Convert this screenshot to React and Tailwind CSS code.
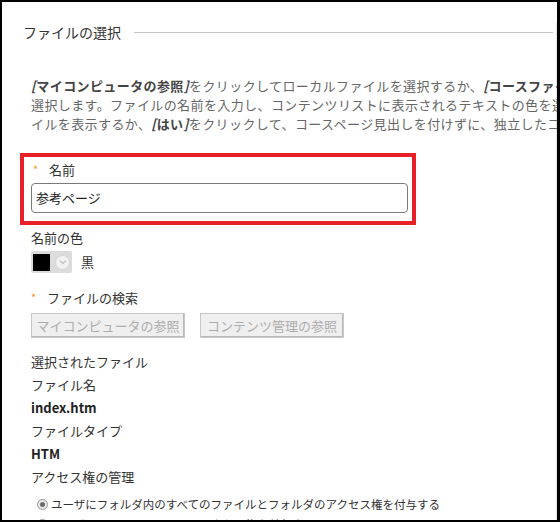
import React from "react";

const Star = () => (
  <span className="inline-block w-[18px] pl-[2px] text-[11px] leading-none text-[#f0960e] relative top-[-1px]">*</span>
);

export default function App() {
  return (
    <div className="w-[560px] h-[522px] overflow-hidden bg-white border-l-2 border-t-2 border-r-[3px] border-b-[2px] border-black font-['Noto_Sans_CJK_JP',sans-serif] text-[#333]">
      <div className="h-full border-r border-[#e6e6e6]">
        {/* Heading */}
        <div className="flex items-center mt-[20px] ml-[21px] mr-[3px] h-[20px]">
          <div className="text-[14px] leading-[20px] text-[#333] whitespace-nowrap">ファイルの選択</div>
          <div className="flex-1 h-px bg-[#c6c6c6] ml-[13px]" />
        </div>

        <div className="pl-[29px]">
          {/* Paragraph */}
          <div className="mt-[34px] text-[13px] leading-[19px] tracking-[0.4px] text-[#666] whitespace-nowrap">
            <div>
              <i className="font-bold text-[#444]">[</i>
              <b className="text-[#444]">マイコンピュータの参照</b>
              <i className="font-bold text-[#444]">]</i>
              をクリックしてローカルファイルを選択するか、
              <i className="font-bold text-[#444]">[</i>
              <b className="text-[#444]">コースファイル</b>
              <i className="font-bold text-[#444]">]</i>
            </div>
            <div>選択します。ファイルの名前を入力し、コンテンツリストに表示されるテキストの色を選択し</div>
            <div>
              イルを表示するか、
              <i className="font-bold text-[#444]">[</i>
              <b className="text-[#444]">はい</b>
              <i className="font-bold text-[#444]">]</i>
              をクリックして、コースページ見出しを付けずに、独立したコンテンツ
            </div>
          </div>

          {/* Red highlighted box */}
          <div className="mt-[20px] -ml-[11px] w-[396px] h-[72px] border-4 border-[#e8202a] pl-[7px]">
            <div className="mt-[3px] h-[20px] flex items-center text-[13px] leading-[20px]">
              <Star />
              <span>名前</span>
            </div>
            <div className="mt-[3px] w-[377px] h-[30px] border border-[#7a7a7a] rounded-[4px] flex items-center pl-[4px] text-[13px] text-[#222]">
              参考ページ
            </div>
          </div>

          {/* Name color */}
          <div className="mt-[4px] h-[18px] text-[13px] leading-[18px]">名前の色</div>
          <div className="mt-[4px] flex items-center h-[22px]">
            <div className="w-[41px] h-[22px] bg-[#dcdcdc] rounded-[2px] flex items-center pl-[2px]">
              <div className="w-[17px] h-[17px] bg-black" />
              <div className="ml-[5px] w-[15px] h-[15px] rounded-full bg-[#f2f2f2] border border-[#d4d4d4] flex items-center justify-center">
                <svg width="8" height="6" viewBox="0 0 8 6">
                  <path d="M1 1.5 L4 4.5 L7 1.5" stroke="#c4c4c4" strokeWidth="1.4" fill="none" />
                </svg>
              </div>
            </div>
            <span className="ml-[9px] text-[13px]">黒</span>
          </div>

          {/* File search */}
          <div className="mt-[16px] h-[18px] flex items-center text-[13px] leading-[18px] -ml-[2px]">
            <Star />
            <span>ファイルの検索</span>
          </div>
          <div className="mt-[6px] flex gap-[15px]">
            <div className="w-[154px] h-[25px] bg-[#efefef] border border-[#c8c8c8] shadow-[inset_-1px_-1px_0_#b8b8b8] flex items-center justify-center text-[13px] text-[#adadad]">
              マイコンピュータの参照
            </div>
            <div className="w-[144px] h-[25px] bg-[#efefef] border border-[#c8c8c8] shadow-[inset_-1px_-1px_0_#b8b8b8] flex items-center justify-center text-[13px] text-[#adadad]">
              コンテンツ管理の参照
            </div>
          </div>

          {/* Selected file info */}
          <div className="mt-[12px] text-[13px] leading-[23px] text-[#333]">
            <div>選択されたファイル</div>
            <div>ファイル名</div>
            <div className="font-bold text-[#222]">index.htm</div>
            <div>ファイルタイプ</div>
            <div className="font-bold text-[#222]">HTM</div>
            <div>アクセス権の管理</div>
          </div>

          <div className="mt-[6px] text-[11.5px] leading-[20px] text-[#333] whitespace-nowrap">
            <div className="flex items-center h-[20px]">
              <span className="ml-[6px] w-[11px] h-[11px] rounded-full border border-[#9a9a9a] bg-[#e8e8e8] flex items-center justify-center">
                <span className="w-[5px] h-[5px] rounded-full bg-[#6d6d6d]" />
              </span>
              <span className="ml-[3px]">ユーザにフォルダ内のすべてのファイルとフォルダのアクセス権を付与する</span>
            </div>
            <div className="flex items-center h-[20px]">
              <span className="ml-[6px] w-[11px] h-[11px] rounded-full border border-[#9a9a9a] bg-white" />
              <span className="ml-[3px]">ユーザにこのファイルのみのアクセス権を付与する</span>
            </div>
          </div>
        </div>
      </div>
    </div>
  );
}
